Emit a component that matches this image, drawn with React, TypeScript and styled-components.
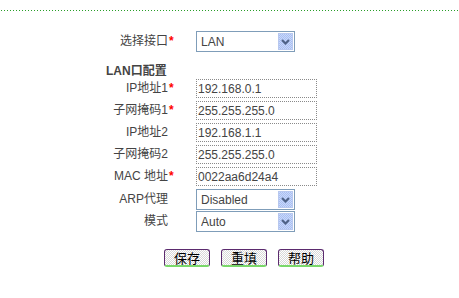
import React from 'react';
import styled, { createGlobalStyle } from 'styled-components';

const GlobalStyle = createGlobalStyle`
  body {
    margin: 0;
    background: #ffffff;
    font-family: "Liberation Sans", "Noto Sans CJK SC", Arial, sans-serif;
    font-size: 12px;
    color: #444444;
  }
`;

const Page = styled.div`
  width: 459px;
  height: 298px;
  padding-top: 10px;
  box-sizing: border-box;
`;

const Divider = styled.div`
  height: 1px;
  margin-left: 1px;
  background: repeating-linear-gradient(to right, #2a9e2a 0 1px, transparent 1px 3px);
`;

const Form = styled.div`
  display: flex;
  flex-direction: column;
  padding-left: 100px;
  margin-top: 20px;
`;

const Row = styled.div<{ $select?: boolean }>`
  display: grid;
  grid-template-columns: 68px 28px auto;
  height: ${({ $select }) => ($select ? '22px' : '22px')};
  align-items: start;
`;

const Label = styled.div<{ $tall?: boolean }>`
  text-align: right;
  line-height: ${({ $tall }) => ($tall ? '21px' : '19px')};
  white-space: nowrap;
  color: #444444;
  font-size: 12px;
`;

const Star = styled.span<{ $tall?: boolean }>`
  color: #ff0000;
  font-weight: bold;
  font-size: 12px;
  line-height: ${({ $tall }) => ($tall ? '21px' : '19px')};
  padding-left: 1px;
`;

const SectionTitle = styled.div`
  margin-top: 11px;
  height: 15px;
  line-height: 15px;
  padding-left: 6px;
  font-weight: bold;
  font-size: 12px;
  color: #444444;
`;

const TextInput = styled.input`
  box-sizing: border-box;
  width: 121px;
  height: 19px;
  border: 1px dotted #8a8a8a;
  padding: 0 1px;
  font-family: "Liberation Sans", Arial, sans-serif;
  font-size: 12px;
  color: #444444;
  background: #ffffff;
  outline: none;
`;

const SelectWrap = styled.div`
  position: relative;
  width: 99px;
  height: 21px;
`;

const SelectBox = styled.select`
  appearance: none;
  box-sizing: border-box;
  width: 99px;
  height: 21px;
  border: 1px solid #7f9db9;
  padding: 0 0 0 4px;
  font-family: "Liberation Sans", Arial, sans-serif;
  font-size: 12px;
  color: #444444;
  background: #ffffff;
  outline: none;
`;

const ArrowButton = styled.span`
  position: absolute;
  top: 2px;
  right: 2px;
  width: 15px;
  height: 17px;
  box-sizing: border-box;
  border: 1px solid #b8c8ef;
  background-color: #c1d3fb;
  background-image: repeating-conic-gradient(#aabff0 0 25%, #c8d8fc 0 50%);
  background-size: 2px 2px;
  display: flex;
  align-items: center;
  justify-content: center;
  pointer-events: none;
`;

const Buttons = styled.div`
  display: flex;
  gap: 11px;
  padding-left: 164px;
  margin-top: 16px;
`;

const Button = styled.button`
  box-sizing: border-box;
  width: 46px;
  height: 18px;
  padding: 0;
  border: 1px solid #5b2a6e;
  border-bottom: 2px solid #7ad86a;
  border-radius: 3px;
  background-color: #f4f4f4;
  background-image: repeating-conic-gradient(#ffffff 0 25%, #d8d8d8 0 50%);
  background-size: 2px 2px;
  font-family: "Noto Sans CJK SC", sans-serif;
  font-size: 13px;
  line-height: 14px;
  color: #000000;
`;

const Chevron = () => (
  <svg width="9" height="6" viewBox="0 0 9 6">
    <path d="M1 1 L4.5 4.5 L8 1" fill="none" stroke="#4d6185" strokeWidth="2" />
  </svg>
);

type Field =
  | { label: string; required?: boolean; kind: 'input'; value: string }
  | { label: string; required?: boolean; kind: 'select'; value: string; options: string[] };

const Select: React.FC<{ value: string; options: string[] }> = ({ value, options }) => (
  <SelectWrap>
    <SelectBox defaultValue={value}>
      {options.map((o) => (
        <option key={o}>{o}</option>
      ))}
    </SelectBox>
    <ArrowButton>
      <Chevron />
    </ArrowButton>
  </SelectWrap>
);

const fields: Field[] = [
  { label: 'IP地址1', required: true, kind: 'input', value: '192.168.0.1' },
  { label: '子网掩码1', required: true, kind: 'input', value: '255.255.255.0' },
  { label: 'IP地址2', kind: 'input', value: '192.168.1.1' },
  { label: '子网掩码2', kind: 'input', value: '255.255.255.0' },
  { label: 'MAC 地址', required: true, kind: 'input', value: '0022aa6d24a4' },
  { label: 'ARP代理', kind: 'select', value: 'Disabled', options: ['Disabled', 'Enabled'] },
  { label: '模式', kind: 'select', value: 'Auto', options: ['Auto', 'Manual'] },
];

const App: React.FC = () => {
  return (
    <Page>
      <GlobalStyle />
      <Divider />
      <Form>
        <Row $select>
          <Label $tall>选择接口</Label>
          <div>
            <Star $tall>*</Star>
          </div>
          <Select value="LAN" options={['LAN', 'WAN']} />
        </Row>
        <SectionTitle>LAN口配置</SectionTitle>
        {fields.map((f) => (
          <Row key={f.label} $select={f.kind === 'select'}>
            <Label $tall={f.kind === 'select'}>{f.label}</Label>
            <div>{f.required && <Star>*</Star>}</div>
            {f.kind === 'input' ? (
              <TextInput defaultValue={f.value} />
            ) : (
              <Select value={f.value} options={f.options} />
            )}
          </Row>
        ))}
      </Form>
      <Buttons>
        <Button>保存</Button>
        <Button>重填</Button>
        <Button>帮助</Button>
      </Buttons>
    </Page>
  );
};

export default App;
